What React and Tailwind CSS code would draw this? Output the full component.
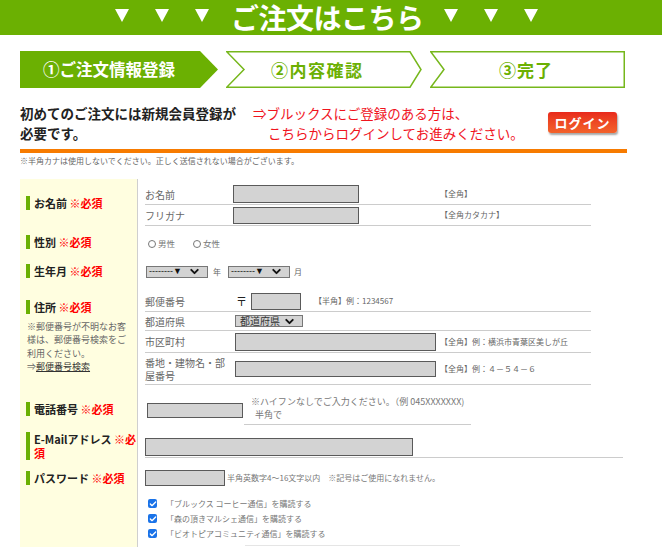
import { ChevronDown, Check } from "lucide-react";

function Tri() {
  return <span className="block w-0 h-0 border-x-[7px] border-x-transparent border-t-[13px] border-t-white" />;
}

function Label({ children }) {
  return (
    <div className="border-l-[4px] border-[#6bb002] pl-[4px] text-[11px] font-bold text-[#222] leading-[14px]">
      {children}
    </div>
  );
}

function Req() {
  return <span className="text-[#ff0000]">※必須</span>;
}

function Input({ className }) {
  return <div className={"bg-[#d3d3d3] border border-[#5a5a5a] shrink-0 " + className} />;
}

function Select({ className, text, textClass }) {
  return (
    <div className={"flex items-center justify-between bg-[#d3d3d3] border border-[#777] pl-[2px] pr-[6px] " + className}>
      <span className={textClass}>{text}</span>
      <ChevronDown size={13} strokeWidth={3.5} className="text-[#111]" />
    </div>
  );
}

function Checked({ text }) {
  return (
    <div className="flex items-center h-[15px]">
      <span className="w-[9px] h-[9px] bg-[#1a73e8] rounded-[2px] flex items-center justify-center ml-[3px] mr-[9px]">
        <Check size={8} strokeWidth={4} className="text-white" />
      </span>
      <span>{text}</span>
    </div>
  );
}

export default function App() {
  return (
    <div className="w-[662px] h-[547px] overflow-hidden bg-white font-['Noto_Sans_CJK_JP','Noto_Sans',sans-serif] text-[#333]">
      {/* header */}
      <div className="h-[35px] bg-[#6bb002] flex items-center pl-[115px]">
        <div className="flex gap-[26px] mt-[-4px]">
          <Tri />
          <Tri />
          <Tri />
        </div>
        <span className="ml-[22px] mr-[20px] text-white font-bold text-[28px] leading-none tracking-[-0.5px] mt-[-2px]">ご注文はこちら</span>
        <div className="flex gap-[26px] mt-[-4px]">
          <Tri />
          <Tri />
          <Tri />
        </div>
      </div>

      <div className="ml-[20px] w-[607px]">
        {/* steps */}
        <div className="flex gap-[8px] mt-[16px] h-[37px]">
          <div className="relative w-[198px] h-[37px] flex items-center pl-[23px]">
            <svg className="absolute inset-0" width="198" height="37" viewBox="0 0 198 37">
              <polygon points="0,0 180,0 198,18.5 180,37 0,37" fill="#6bb002" />
            </svg>
            <span className="relative text-white font-bold text-[16.5px] leading-none">①ご注文情報登録</span>
          </div>
          <div className="relative w-[196px] h-[37px] flex items-center pl-[45px]">
            <svg className="absolute inset-0" width="196" height="37" viewBox="0 0 196 37">
              <polygon points="0.75,0.75 184,0.75 195,18.5 184,36.25 0.75,36.25 18,18.5" fill="white" stroke="#76b71c" strokeWidth="1.5" />
            </svg>
            <span className="relative text-[#6bb002] font-bold text-[17px] tracking-[1.5px] leading-none">②内容確認</span>
          </div>
          <div className="relative w-[195px] h-[37px] flex items-center pl-[69px]">
            <svg className="absolute inset-0" width="195" height="37" viewBox="0 0 195 37">
              <polygon points="0.75,0.75 194.25,0.75 194.25,36.25 0.75,36.25 14,18.5" fill="white" stroke="#76b71c" strokeWidth="1.5" />
            </svg>
            <span className="relative text-[#6bb002] font-bold text-[17px] tracking-[1px] leading-none">③完了</span>
          </div>
        </div>

        {/* intro */}
        <div className="flex mt-[15px] h-[40px]">
          <div className="w-[233px] text-[13.5px] font-bold leading-[20px] text-[#222]">
            初めてのご注文には新規会員登録が
            <br />
            必要です。
          </div>
          <div className="flex-1 text-[13.5px] leading-[20px] text-[#f0141e]">
            ⇒ブルックスにご登録のある方は、
            <br />
            <span className="pl-[15px]">こちらからログインしてお進みください。</span>
          </div>
          <div className="mt-[9px] mr-[10px] w-[69px] h-[21px] rounded-[3px] bg-gradient-to-b from-[#e8281c] to-[#f3622b] shadow-[1px_2px_2px_rgba(0,0,0,0.35)] flex items-center justify-center text-white font-bold text-[13px] tracking-[1px]">
            ログイン
          </div>
        </div>
        <div className="mt-[6px] h-[4px] bg-[#f77b00]" />
        <div className="mt-[3px] text-[8px] leading-[10px] text-[#666]">
          ※半角カナは使用しないでください。正しく送信されない場合がございます。
        </div>

        {/* form */}
        <div className="mt-[13px] text-[#666]">
          {/* name */}
          <div className="flex h-[47px]">
            <div className="w-[118px] shrink-0 bg-[#fffee0] border-r border-[#cfcfcf] flex items-center pl-[6px]">
              <Label>
                お名前 <Req />
              </Label>
            </div>
            <div className="pl-[7px]">
              <div className="w-[446px] h-[26px] pt-[5px] flex items-center border-b border-[#cccccc]">
                <span className="w-[88px] text-[10px]">お名前</span>
                <Input className="w-[126px] h-[18px]" />
                <span className="ml-[81px] text-[8px]">【全角】</span>
              </div>
              <div className="w-[446px] h-[21px] flex items-center border-b border-[#cccccc]">
                <span className="w-[88px] text-[10px]">フリガナ</span>
                <Input className="w-[126px] h-[17px]" />
                <span className="ml-[81px] text-[8px]">【全角カタカナ】</span>
              </div>
            </div>
          </div>

          {/* gender */}
          <div className="flex h-[31px]">
            <div className="w-[118px] shrink-0 bg-[#fffee0] border-r border-[#cfcfcf] flex items-center pl-[6px]">
              <Label>
                性別 <Req />
              </Label>
            </div>
            <div className="pl-[10px] flex items-center pt-[4px] text-[8.5px] text-[#777]">
              <span className="w-[8px] h-[8px] rounded-full border border-[#777] mr-[2px]" />
              <span>男性</span>
              <span className="w-[8px] h-[8px] rounded-full border border-[#777] ml-[18px] mr-[2px]" />
              <span>女性</span>
            </div>
          </div>

          {/* birth */}
          <div className="flex h-[27px]">
            <div className="w-[118px] shrink-0 bg-[#fffee0] border-r border-[#cfcfcf] flex items-center pl-[6px]">
              <Label>
                生年月 <Req />
              </Label>
            </div>
            <div className="pl-[8px] flex items-center pt-[2px] text-[8px]">
              <Select className="w-[62px] h-[12px]" text="--------▼" textClass="text-[9px] text-[#111] font-['Liberation_Sans',sans-serif] leading-none" />
              <span className="ml-[5px] mr-[7px]">年</span>
              <Select className="w-[62px] h-[12px]" text="--------▼" textClass="text-[9px] text-[#111] font-['Liberation_Sans',sans-serif] leading-none" />
              <span className="ml-[4px]">月</span>
            </div>
          </div>

          {/* address */}
          <div className="flex h-[105px]">
            <div className="w-[118px] shrink-0 bg-[#fffee0] border-r border-[#cfcfcf] flex items-center pl-[6px]">
              <div>
                <Label>
                  住所 <Req />
                </Label>
                <div className="mt-[6px] pl-[1px] text-[9px] leading-[13.3px] text-[#666]">
                  ※郵便番号が不明なお客
                  <br />
                  様は、郵便番号検索をご
                  <br />
                  利用ください。
                  <br />
                  ⇒<span className="underline text-[#333]">郵便番号検索</span>
                </div>
              </div>
            </div>
            <div className="pl-[7px] pt-[7px]">
              <div className="w-[446px] h-[21px] flex items-center border-b border-[#cccccc]">
                <span className="w-[91px] text-[10px]">郵便番号</span>
                <span className="w-[15px] text-[11px] text-[#222]">〒</span>
                <Input className="w-[50px] h-[17px]" />
                <span className="ml-[13px] text-[8px]">【半角】例：1234567</span>
              </div>
              <div className="w-[446px] h-[19px] flex items-center border-b border-[#cccccc]">
                <span className="w-[90px] text-[10px]">都道府県</span>
                <Select className="w-[68px] h-[12px] pl-[4px]" text="都道府県" textClass="text-[10px] leading-none text-[#333]" />
              </div>
              <div className="w-[446px] h-[22px] flex items-center border-b border-[#cccccc]">
                <span className="w-[90px] text-[10px]">市区町村</span>
                <Input className="w-[201px] h-[18px]" />
                <span className="ml-[4px] text-[8px]">【全角】例：横浜市青葉区美しが丘</span>
              </div>
              <div className="w-[446px] h-[32px] flex items-center border-b border-[#cccccc]">
                <span className="w-[90px] pr-[8px] text-[10px] leading-[13px]">番地・建物名・部屋番号</span>
                <Input className="w-[201px] h-[16px]" />
                <span className="ml-[4px] text-[8px]">【全角】例：４－５４－６</span>
              </div>
            </div>
          </div>

          {/* phone */}
          <div className="flex h-[40px]">
            <div className="w-[118px] shrink-0 bg-[#fffee0] border-r border-[#cfcfcf] flex items-center pl-[6px]">
              <Label>
                電話番号 <Req />
              </Label>
            </div>
            <div className="pl-[9px] flex items-center pt-[2px]">
              <Input className="w-[96px] h-[15px]" />
              <div className="ml-[1px] w-[227px] h-[30px] border-b border-[#cccccc] pl-[7px] text-[9px] leading-[13px] text-[#777]">
                ※ハイフンなしでご入力ください。（例 045XXXXXXX)
                <br />
                <span className="pl-[4px]">半角で</span>
              </div>
            </div>
          </div>

          {/* email */}
          <div className="flex h-[34px]">
            <div className="w-[118px] shrink-0 bg-[#fffee0] border-r border-[#cfcfcf] flex items-center pl-[6px]">
              <Label>
                E-Mailアドレス <span className="text-[#ff0000]">※必</span>
                <br />
                <span className="text-[#ff0000]">須</span>
              </Label>
            </div>
            <div className="pl-[7px]">
              <div className="w-[478px] pt-[9px] pb-[1px] border-b border-[#cccccc]">
                <Input className="w-[268px] h-[18px]" />
              </div>
            </div>
          </div>

          {/* password */}
          <div className="flex h-[30px]">
            <div className="w-[118px] shrink-0 bg-[#fffee0] border-r border-[#cfcfcf] flex items-center pl-[6px]">
              <Label>
                パスワード <Req />
              </Label>
            </div>
            <div className="pl-[7px] pt-[7px] flex items-center h-[23px]">
              <Input className="w-[80px] h-[16px]" />
              <span className="ml-[2px] text-[8px] text-[#777]">半角英数字4～16文字以内　※記号はご使用になれません。</span>
            </div>
          </div>

          {/* newsletters */}
          <div className="flex h-[60px]">
            <div className="w-[118px] shrink-0 bg-[#fffee0] border-r border-[#cfcfcf]" />
            <div className="pl-[7px] pt-[3px] text-[8px] text-[#777]">
              <Checked text="「ブルックス コーヒー通信」を購読する" />
              <Checked text="「森の頂きマルシェ通信」を購読する" />
              <Checked text="「ビオトピアコミュニティ通信」を購読する" />
              <div className="mt-[4px] ml-[100px] w-[215px] border-t border-[#e5e5e5]" />
            </div>
          </div>
        </div>
      </div>
    </div>
  );
}
